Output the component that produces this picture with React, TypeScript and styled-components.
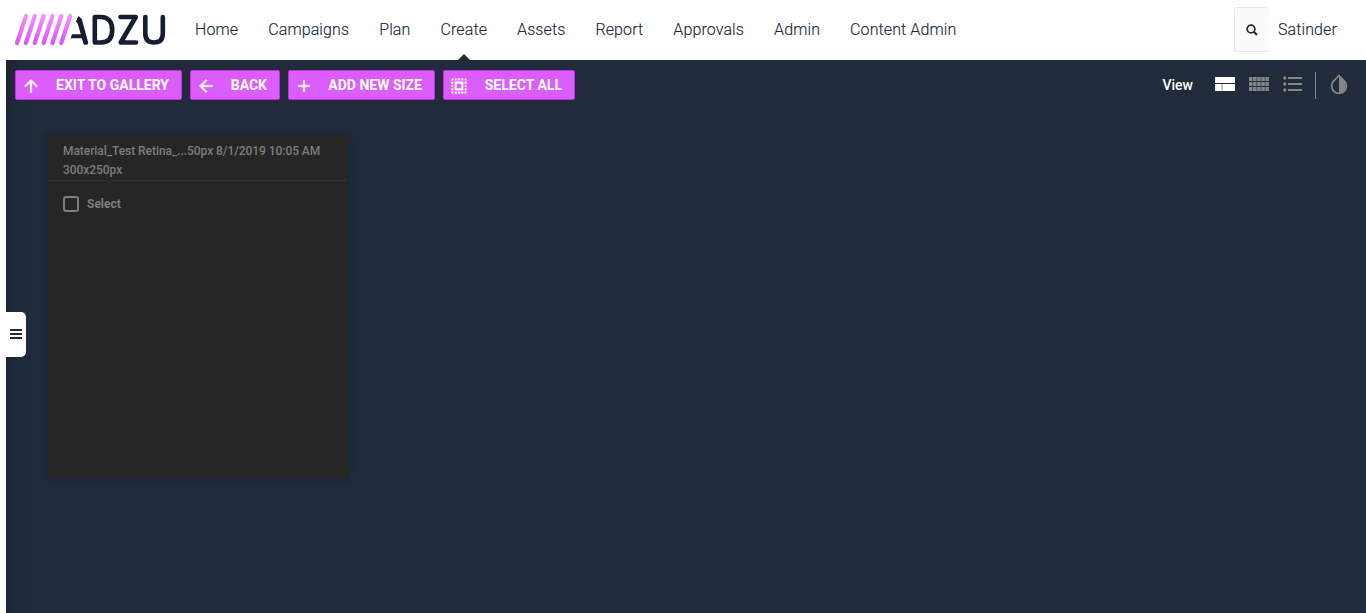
import React from "react";
import styled, { createGlobalStyle } from "styled-components";
import { MdArrowUpward, MdArrowBack, MdAdd, MdSelectAll } from "react-icons/md";

const GlobalStyle = createGlobalStyle`
  * { box-sizing: border-box; }
  body {
    margin: 0;
    background: #fff;
    font-family: Roboto, "Liberation Sans", sans-serif;
    overflow: hidden;
  }
`;

const Page = styled.div`
  height: 613px;
  display: flex;
  flex-direction: column;
`;

const Header = styled.header`
  height: 60px;
  flex: none;
  display: flex;
  align-items: flex-start;
  padding: 0 29px 0 14px;
  color: #212b3c;
`;

const LogoMark = styled.svg`
  width: 152px;
  height: 36px;
  margin-top: 12px;
  flex: none;
`;

const Nav = styled.nav`
  display: flex;
  gap: 30px;
  margin-left: 29px;
  height: 60px;
`;

const NavItem = styled.a<{ $active?: boolean }>`
  position: relative;
  font-size: 16px;
  font-weight: 300;
  letter-spacing: 0.11px;
  line-height: 59px;
  white-space: nowrap;
  -webkit-text-stroke: 0.15px currentColor;
  ${({ $active }) =>
    $active &&
    `&::after {
      content: "";
      position: absolute;
      left: 50%;
      bottom: 0;
      margin-left: -6px;
      border: 6px solid transparent;
      border-top: 0;
      border-bottom-color: #212b3c;
    }`}
`;

const SearchButton = styled.button`
  width: 35px;
  height: 45px;
  margin: 7px 9px 0 auto;
  padding: 0;
  display: flex;
  align-items: center;
  justify-content: center;
  background: #fafafa;
  border: 1px solid #e8e8e8;
  border-right: 0;
  border-radius: 3px;
`;

const UserName = styled.span`
  font-size: 16px;
  font-weight: 300;
  letter-spacing: 0.12px;
  line-height: 59px;
  -webkit-text-stroke: 0.15px currentColor;
`;

const Workspace = styled.main`
  position: relative;
  flex: 1;
  margin-left: 6px;
  background: linear-gradient(90deg, #1b2432 0, #1e293a 12px, #202b3c 24px, #212b3c 30px);
`;

const Toolbar = styled.div`
  display: flex;
  align-items: center;
  height: 50px;
  padding: 0 18px 0 9px;
`;

const Actions = styled.div`
  display: flex;
  gap: 8px;
`;

const ActionButton = styled.button<{ $width: number }>`
  width: ${({ $width }) => $width}px;
  height: 30px;
  display: flex;
  align-items: center;
  justify-content: space-between;
  padding: 0 12px 0 5px;
  background: #db5dfb;
  border: 1px solid #c52bea;
  border-radius: 2px;
  color: #fff;
  font: 700 14px Roboto, sans-serif;
  white-space: nowrap;
  svg {
    position: relative;
    top: 1px;
  }
  svg path:not([fill="none"]) {
    stroke: #fff;
    stroke-width: 0.5px;
  }
`;

const ViewTools = styled.div`
  display: flex;
  align-items: center;
  margin-left: auto;
`;

const ViewLabel = styled.span`
  color: #fff;
  font-size: 14px;
  font-weight: 500;
  margin-right: 22px;
`;

const ToolIcon = styled.svg<{ $gap?: number }>`
  display: block;
  margin-right: ${({ $gap = 0 }) => $gap}px;
  margin-bottom: 2px;
`;

const Divider = styled.span`
  width: 1px;
  height: 27px;
  margin-right: 14px;
  background: #858b94;
`;

const Card = styled.section`
  width: 302px;
  height: 344px;
  margin: 24px 0 0 41px;
  background: #262626;
  border-radius: 2px;
  box-shadow: 0 1px 4px rgba(12, 24, 48, 0.5);
  color: #7d7d7d;
  font-size: 12px;
`;

const CardHeader = styled.div`
  height: 47px;
  margin: 0 1px;
  padding: 8px 14px 0 15px;
  border-bottom: 1px solid #2e2e2e;
  font-weight: 500;
  letter-spacing: -0.06px;
  line-height: 19px;
  white-space: nowrap;
`;

const SelectRow = styled.label`
  display: flex;
  align-items: center;
  gap: 8px;
  padding: 15px 16px 0;
  font-weight: 700;
  line-height: 16px;
`;

const CheckBox = styled.span`
  width: 16px;
  height: 16px;
  border: 2px solid #7d7d7d;
  border-radius: 3px;
`;

const DrawerTab = styled.button`
  position: absolute;
  left: 0;
  top: 252px;
  width: 20px;
  height: 45px;
  padding: 0 0 1px 4px;
  border: 0;
  border-radius: 0 5px 5px 0;
  background: #fff;
  display: flex;
  align-items: center;
`;

const navItems = ["Home", "Campaigns", "Plan", "Create", "Assets", "Report", "Approvals", "Admin", "Content Admin"];

const actions = [
  { label: "EXIT TO GALLERY", width: 167, Icon: MdArrowUpward },
  { label: "BACK", width: 90, Icon: MdArrowBack },
  { label: "ADD NEW SIZE", width: 147, Icon: MdAdd },
  { label: "SELECT ALL", width: 132, Icon: MdSelectAll },
];

function Logo() {
  return (
    <LogoMark viewBox="14 12 152 36" fill="none" strokeLinecap="round" strokeLinejoin="round">
      <defs>
        <linearGradient id="slash" gradientUnits="userSpaceOnUse" x1="0" y1="14" x2="0" y2="45">
          <stop stopColor="#f296fb" />
          <stop offset="1" stopColor="#d953f8" />
        </linearGradient>
      </defs>
      <g stroke="url(#slash)" strokeWidth="4.2">
        {[0, 1, 2, 3, 4, 5].map((i) => (
          <path key={i} d={`M${17 + i * 8.85} 43L${26 + i * 8.85} 16`} />
        ))}
      </g>
      <g stroke="#171c31" strokeWidth="4.6">
        <path d="M79.4 20L85.6 42.3" strokeWidth="5" />
        <path d="M76 21.5L78.6 15.8L81.6 20L80 26Z" fill="#171c31" stroke="none" />
        <path d="M70.6 38.2L72 34.3H82V38.2Z" fill="#171c31" stroke="none" />
        <path d="M94.8 17V42.5H101C108 42.5 112.2 38.5 112.2 30S108 17 101 17Z" />
        <path d="M120.5 17H135.8L120.7 42.5H136" />
        <path d="M145.3 17V33.5C145.3 39.5 148.5 42.5 154 42.5S162.8 39.5 162.8 33.5V17" />
      </g>
    </LogoMark>
  );
}

export default function App() {
  return (
    <Page>
      <GlobalStyle />
      <Header>
        <Logo />
        <Nav>
          {navItems.map((item) => (
            <NavItem key={item} $active={item === "Create"}>{item}</NavItem>
          ))}
        </Nav>
        <SearchButton aria-label="Search">
          <svg width="12" height="12" viewBox="0 0 12 12" fill="none" stroke="#212b3c" strokeWidth="1.7">
            <circle cx="5" cy="5" r="3.9" />
            <path d="M7.8 7.8L11 11" strokeWidth="2.2" />
          </svg>
        </SearchButton>
        <UserName>Satinder</UserName>
      </Header>
      <Workspace>
        <Toolbar>
          <Actions>
            {actions.map(({ label, width, Icon }) => (
              <ActionButton key={label} $width={width}>
                <Icon size={20} />
                <span>{label}</span>
              </ActionButton>
            ))}
          </Actions>
          <ViewTools>
            <ViewLabel>View</ViewLabel>
            <ToolIcon $gap={14} width="20" height="14" fill="#fff">
              <path d="M0 0H20V6H0ZM0 7H6.3V14H0ZM7.7 7H20V14H7.7Z" />
              <path d="M6 7H8V14H6Z" fill="#c8cacf" />
            </ToolIcon>
            <ToolIcon $gap={14} width="20" height="14" fill="#858585">
              {[0, 5, 10].map((y) =>
                [0, 4.1, 8.2, 12.3, 16.4].map((x) => <rect key={`${x}-${y}`} x={x} y={y} width="3.5" height="4" />)
              )}
            </ToolIcon>
            <ToolIcon $gap={13} width="19" height="16" fill="#858585">
              {[2, 8, 14].map((y) => (
                <g key={y}>
                  <circle cx="1.8" cy={y} r="1.7" />
                  <rect x="5" y={y - 1} width="14" height="2" />
                </g>
              ))}
            </ToolIcon>
            <Divider />
            <ToolIcon width="18" height="20" viewBox="0 0 18 20">
              <path d="M9 1.5L14.2 6.9A7.35 7.35 0 1 1 3.8 6.9Z" fill="none" stroke="#858585" strokeWidth="1.8" />
              <path d="M9 1.5L14.2 6.9A7.35 7.35 0 0 1 9 19Z" fill="#858585" />
            </ToolIcon>
          </ViewTools>
        </Toolbar>
        <Card>
          <CardHeader>
            Material_Test Retina_...50px 8/1/2019 10:05 AM
            <br />
            300x250px
          </CardHeader>
          <SelectRow>
            <CheckBox />
            Select
          </SelectRow>
        </Card>
        <DrawerTab aria-label="Open menu">
          <svg width="12" height="10" fill="#212b3c">
            <path d="M0 0H12V2H0ZM0 4H12V6H0ZM0 8H12V10H0Z" />
          </svg>
        </DrawerTab>
      </Workspace>
    </Page>
  );
}
